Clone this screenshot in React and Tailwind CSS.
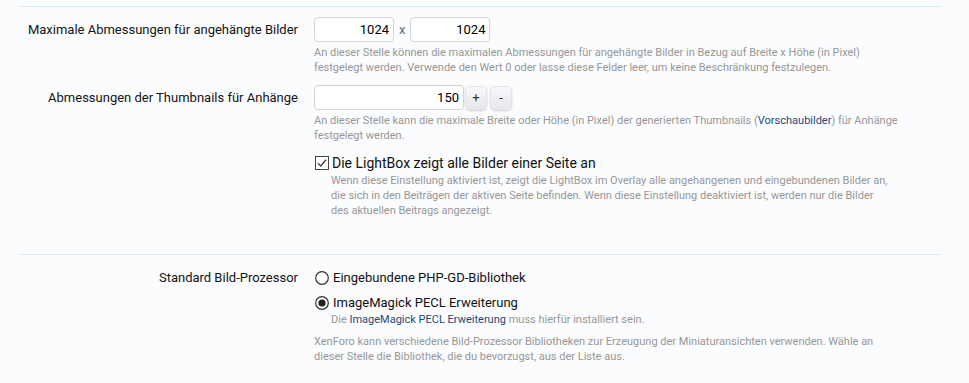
import React from "react";

const font = { fontFamily: "Roboto, 'Liberation Sans', sans-serif" };

function Label({ children }) {
  return (
    <div className="text-right text-[13px] leading-[25px] text-[#141414]">{children}</div>
  );
}

function Desc({ children, className = "" }) {
  return <div className={"text-[11px] leading-[15px] text-[#979797] " + className}>{children}</div>;
}

function NumInput({ value, w }) {
  return (
    <div
      className={
        "h-[25px] rounded-[4px] border border-[#d3d3d6] bg-white pr-[4px] text-right text-[13px] leading-[23px] text-black " + w
      }
    >
      {value}
    </div>
  );
}

function StepBtn({ children }) {
  return (
    <div className="flex h-[24px] w-[22px] items-center justify-center rounded-[5px] border border-[#e3e3e8] bg-gradient-to-b from-[#f8f8fa] to-[#e6e6ec] text-[13px] text-[#333] shadow-[0_1px_2px_rgba(0,0,0,0.18)]">
      {children}
    </div>
  );
}

function CheckBox() {
  return (
    <svg width="14" height="14" viewBox="0 0 14 14" className="shrink-0">
      <rect x="0.5" y="0.5" width="13" height="13" fill="#fff" stroke="#444" strokeWidth="1" />
      <path d="M3 7.2 L5.8 10 L11 3.8" fill="none" stroke="#444" strokeWidth="1.4" />
    </svg>
  );
}

function Radio({ checked }) {
  return (
    <svg width="14" height="14" viewBox="0 0 14 14" className="shrink-0">
      <circle cx="7" cy="7" r="6.3" fill="#fff" stroke="#333" strokeWidth="1.2" />
      {checked && <circle cx="7" cy="7" r="3.6" fill="#222" />}
    </svg>
  );
}

export default function App() {
  return (
    <div className="h-[383px] w-[969px] overflow-hidden bg-[#fbfcfe]" style={font}>
      <div className="ml-[19px] w-[923px] pt-[6px]">
        <div className="border-t border-[#d6eaf8]" />

        {/* Row 1 */}
        <div className="mt-[10px] grid grid-cols-[279px_586px] gap-x-4">
          <Label>Maximale Abmessungen für angehängte Bilder</Label>
          <div>
            <div className="flex items-center">
              <NumInput value="1024" w="w-[80px]" />
              <span className="mx-[5px] text-[13px] text-[#5b6e82]">x</span>
              <NumInput value="1024" w="w-[80px]" />
            </div>
            <Desc className="mt-[3px]">
              An dieser Stelle können die maximalen Abmessungen für angehängte Bilder in Bezug auf Breite x Höhe (in Pixel) festgelegt werden. Verwende den Wert 0 oder lasse diese Felder leer, um keine Beschränkung festzulegen.
            </Desc>
          </div>
        </div>

        {/* Row 2 */}
        <div className="mt-[10px] grid grid-cols-[279px_586px] gap-x-4">
          <Label>Abmessungen der Thumbnails für Anhänge</Label>
          <div>
            <div className="flex items-center">
              <NumInput value="150" w="w-[150px]" />
              <div className="ml-[1px] flex gap-[3px]">
                <StepBtn>+</StepBtn>
                <StepBtn>-</StepBtn>
              </div>
            </div>
            <Desc className="mt-[3px]">
              An dieser Stelle kann die maximale Breite oder Höhe (in Pixel) der generierten Thumbnails (<span className="text-[#1b4a78]">Vorschaubilder</span>) für Anhänge
              <br />
              festgelegt werden.
            </Desc>
          </div>
        </div>

        {/* Row 3 */}
        <div className="mt-[11px] grid grid-cols-[279px_586px] gap-x-4">
          <div />
          <div>
            <div className="flex items-center gap-[3px] text-[14px] leading-[18px] text-[#111]">
              <span className="ml-[1px] flex items-center"><CheckBox /></span>
              <span>Die LightBox zeigt alle Bilder einer Seite an</span>
            </div>
            <Desc className="ml-[17px] mt-[1px]">
              Wenn diese Einstellung aktiviert ist, zeigt die LightBox im Overlay alle angehangenen und eingebundenen Bilder an,
              <br />
              die sich in den Beiträgen der aktiven Seite befinden. Wenn diese Einstellung deaktiviert ist, werden nur die Bilder
              <br />
              des aktuellen Beitrags angezeigt.
            </Desc>
          </div>
        </div>

        <div className="mt-[36px] border-t border-[#dde8f1]" />

        {/* Row 4 */}
        <div className="mt-[14px] grid grid-cols-[279px_586px] gap-x-4">
          <div className="text-right text-[13px] leading-[18px] text-[#141414]">Standard Bild-Prozessor</div>
          <div>
            <div className="flex items-center gap-[4px] text-[13px] leading-[18px] text-[#111]">
              <span className="ml-[1px] flex items-center"><Radio /></span>
              <span>Eingebundene PHP-GD-Bibliothek</span>
            </div>
            <div className="mt-[7px] flex items-center gap-[4px] text-[13px] leading-[18px] text-[#111]">
              <span className="ml-[1px] flex items-center"><Radio checked /></span>
              <span>ImageMagick PECL Erweiterung</span>
            </div>
            <Desc className="ml-[17px]">
              Die <span className="text-[#1b4a78]">ImageMagick PECL Erweiterung</span> muss hierfür installiert sein.
            </Desc>
            <Desc className="mt-[7px]">
              XenForo kann verschiedene Bild-Prozessor Bibliotheken zur Erzeugung der Miniaturansichten verwenden. Wähle an dieser Stelle die Bibliothek, die du bevorzugst, aus der Liste aus.
            </Desc>
          </div>
        </div>
      </div>
    </div>
  );
}
